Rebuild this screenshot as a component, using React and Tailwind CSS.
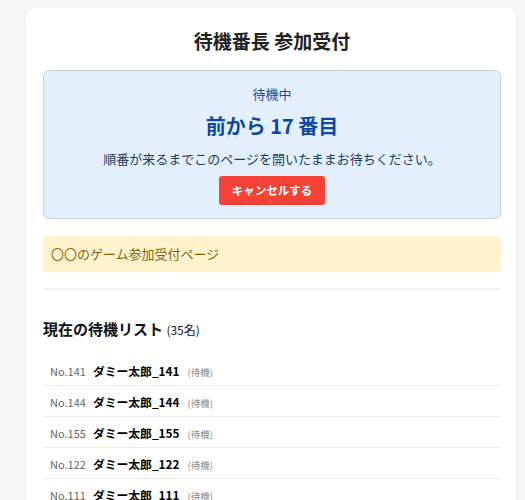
const waiting = [
  { no: 141, name: "ダミー太郎_141" },
  { no: 144, name: "ダミー太郎_144" },
  { no: 155, name: "ダミー太郎_155" },
  { no: 122, name: "ダミー太郎_122" },
  { no: 111, name: "ダミー太郎_111" },
];

// One waiting user, number / name / status.
function QueueRow({ item }) {
  return (
    <li className="flex h-[31px] items-baseline border-b border-[#ebebeb] pl-[7px] pt-[7px] leading-[17px]">
      <span className="text-[11px] text-[#666]">No.{item.no}</span>
      <span className="ml-[7px] text-[11.8px] font-bold text-black">{item.name}</span>
      <span className="ml-[8px] text-[9.5px] text-[#888]">(待機)</span>
    </li>
  );
}

export default function App() {
  return (
    <div
      className="min-h-screen bg-[#f7f7f7] pl-[26px] pr-[9px] pt-[8px]"
      style={{ fontFamily: '"Noto Sans CJK JP", "Noto Sans", sans-serif' }}
    >
      <div className="rounded-lg bg-white pb-6 pl-[17px] pr-[15px] pt-[19px] shadow-[0_1px_4px_rgba(0,0,0,0.06)]">
        <h1 className="text-center text-[19px] font-bold leading-[28px] text-[#222]">待機番長 参加受付</h1>

        <div className="mt-[15px] flex flex-col items-center rounded-md border border-[#cbd0d5] bg-[#e3f0fb] pb-[13px] pt-[13px]">
          <p className="text-[13px] leading-[20px] text-[#1a4f8f]">待機中</p>
          <p className="mt-[7px] text-[20px] font-bold leading-[30px] text-[#0d47a1]">前から 17 番目</p>
          <p className="mt-[8px] text-[13px] leading-[20px] text-[#233b5c]">
            順番が来るまでこのページを開いたままお待ちください。
          </p>
          <button className="mt-[7px] h-[29px] rounded-[3px] bg-[#f44336] px-[13px] text-[11.5px] font-bold text-white">
            キャンセルする
          </button>
        </div>

        <div className="mt-[17px] rounded bg-[#fff3cd] px-[8px] py-[8px] text-[13px] leading-[20px] text-[#856404]">
          〇〇のゲーム参加受付ページ
        </div>

        <div className="mt-[16px] h-[2px] bg-[#f0f0f0]" />

        <h2 className="mt-[28px] text-[15px] font-bold leading-[22px] text-[#111]">
          現在の待機リスト <span className="text-[12px] font-normal">(35名)</span>
        </h2>

        <ul className="mt-[14px]">
          {waiting.map((item) => (
            <QueueRow key={item.no} item={item} />
          ))}
        </ul>
      </div>
    </div>
  );
}
